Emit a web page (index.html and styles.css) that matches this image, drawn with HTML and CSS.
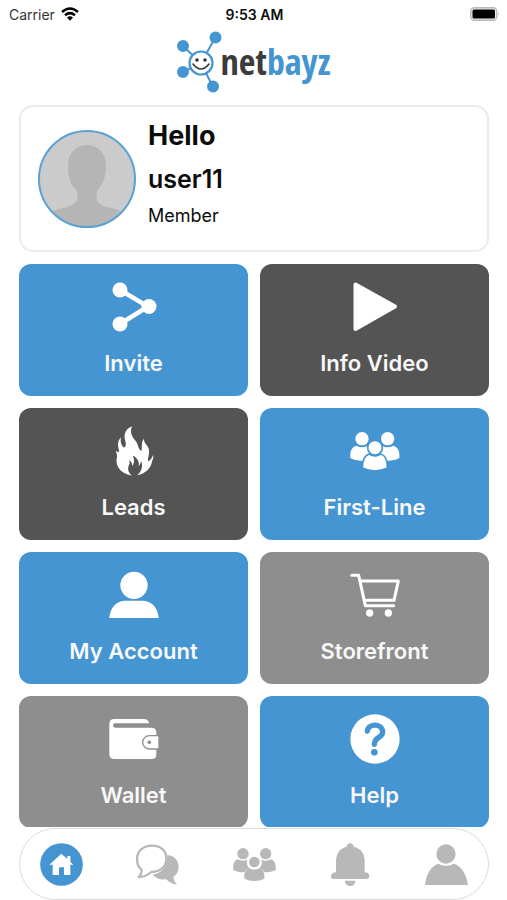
FILE: index.html
```
<!DOCTYPE html>
<html lang="en">
<head>
    <meta charset="utf-8">
    <meta name="viewport" content="width=device-width, initial-scale=1">
    <title>netbayz</title>
    <link rel="stylesheet" href="styles.css">
</head>
<body>
    <div class="status-bar">
        <div class="carrier">
            <span>Carrier</span>
            <svg class="wifi" viewBox="0 0 18 14" aria-hidden="true">
                <path d="M1 5 Q9 -2 17 5 M4 8.200 Q9 4 14 8.200" fill="none" stroke="#000" stroke-width="2.500"/>
                <path d="M6 10.500 Q9 8 12 10.500 L9 13.800 Z"/>
            </svg>
        </div>
        <span class="time">9:53 AM</span>
        <svg class="battery" viewBox="0 0 30 14" aria-hidden="true">
            <rect x="0.700" y="0.700" width="26" height="12.600" rx="3.500" fill="#eee" stroke="#b9b9b9" stroke-width="1.400"/>
            <rect x="2.500" y="2.500" width="22.500" height="9" rx="1.500"/>
            <path d="M28.200 5 Q30 7 28.200 9 Z" fill="#b9b9b9"/>
        </svg>
    </div>

    <header class="header">
        <svg class="logo-mark" viewBox="0 0 44 64" aria-hidden="true">
            <g stroke="#4495d1" stroke-width="2" fill="#4495d1">
                <path d="M7 16 L25 33 M39 8 L25 33 M7 42 L25 33 M37 57 L25 33"/>
                <circle cx="39.500" cy="7.500" r="5"/>
                <circle cx="7" cy="16" r="5"/>
                <circle cx="7" cy="42" r="5"/>
                <circle cx="37" cy="56.500" r="5"/>
                <circle cx="25" cy="33" r="11.500" fill="#fff" stroke-width="2.200"/>
            </g>
            <circle cx="21" cy="30" r="1.800" fill="#333"/>
            <circle cx="29" cy="30" r="1.800" fill="#333"/>
            <path d="M17 34 Q25 44 33 34" fill="none" stroke="#333" stroke-width="1.600" stroke-linecap="round"/>
        </svg>
        <span class="logo-text">net<b>bayz</b></span>
    </header>

    <main class="content">
        <section class="profile">
            <svg class="avatar" viewBox="0 0 98 98" aria-hidden="true">
                <clipPath id="avatarClip"><circle cx="49" cy="49" r="48"/></clipPath>
                <circle cx="49" cy="49" r="48" fill="#cbcbcb"/>
                <path clip-path="url(#avatarClip)" fill="#b5b5b5" d="M49 15 C60 15 68 23 68 36 C68 48 64 56 59 61 C57 71 60 74 69 77 C78 79 84 81 88 84 V98 H10 V84 C15 80 21 79 29 77 C38 74 41 71 39 61 C33 56 30 48 30 36 C30 23 38 15 49 15 Z"/>
                <circle cx="49" cy="49" r="48" fill="none" stroke="#5ba1d4" stroke-width="2"/>
            </svg>
            <div class="profile-text">
                <h1>Hello</h1>
                <h2>user11</h2>
                <p>Member</p>
            </div>
        </section>

        <div class="tiles">
            <a class="tile blue" href="#invite">
                <svg viewBox="0 0 50 50" aria-hidden="true">
                    <path d="M11 8 L39 24.500 L11 42" fill="none" stroke="#fff" stroke-width="4.500"/>
                    <circle cx="11" cy="8" r="7.500"/>
                    <circle cx="40" cy="24.500" r="7.500"/>
                    <circle cx="11" cy="42" r="7.500"/>
                </svg>
                <span>Invite</span>
            </a>
            <a class="tile dark" href="#video">
                <svg viewBox="0 0 50 50" aria-hidden="true">
                    <path d="M5.500 2.500 L45 24.500 L5.500 47 Z" stroke="#fff" stroke-width="4" stroke-linejoin="round"/>
                </svg>
                <span>Info Video</span>
            </a>
            <a class="tile dark" href="#leads">
                <svg viewBox="56 33 150 150" aria-hidden="true">
                    <path d="M125 34 C105 42 99 60 105 78 C108 90 106 95 101 98 C94 93 89 82 92 67 C81 78 82 92 86 106 C87 114 80 112 77 106 C76 114 82 118 80 126 C74 150 86 174 125 182 C116 174 111 164 114 155 C117 148 120 146 116 136 C124 139 125 146 126 153 C133 144 132 134 128 122 C142 128 148 142 145 153 C150 149 151 144 152 138 C158 152 156 168 140 181 C166 176 180 160 184 144 C185 136 191 130 188 120 C185 128 181 136 174 139 C170 132 178 120 176 105 C174 90 160 86 161 71 C151 82 157 98 153 108 C144 104 144 88 136 78 C126 66 117 54 125 34 Z"/>
                </svg>
                <span>Leads</span>
            </a>
            <a class="tile blue" href="#first-line">
                <svg viewBox="119 33 150 150" aria-hidden="true">
                    <g>
                        <circle cx="155" cy="71" r="20"/>
                        <circle cx="232" cy="71" r="20"/>
                        <path d="M138 92 Q155 102 172 92 Q188 98 188 128 Q170 138 150 137 Q130 136 120 129 Q117 98 138 92 Z"/>
                        <path d="M249 92 Q232 102 215 92 Q199 98 199 128 Q217 138 237 137 Q257 136 267 129 Q270 98 249 92 Z"/>
                    </g>
                    <g stroke="#4495d1" stroke-width="5">
                        <path d="M176 117 Q194 128 212 117 Q232 124 231 159 Q212 168 194 168 Q174 168 156 159 Q156 124 176 117 Z"/>
                        <circle cx="194" cy="98" r="22"/>
                    </g>
                </svg>
                <span>First-Line</span>
            </a>
            <a class="tile blue" href="#account">
                <svg viewBox="146 30 150 150" aria-hidden="true">
                    <circle cx="221" cy="76" r="41"/>
                    <path d="M147 174 C149 142 168 122 196 122 H246 C274 122 293 142 295 174 Z"/>
                </svg>
                <span>My Account</span>
            </a>
            <a class="tile gray" href="#storefront">
                <svg viewBox="119 30 150 150" aria-hidden="true">
                    <path d="M124 46 H145 L165 137 H250 M150 63 H264 L251 121 H162" fill="none" stroke="#fff" stroke-width="9" stroke-linejoin="round" stroke-linecap="round"/>
                    <circle cx="178" cy="159" r="11"/>
                    <circle cx="234" cy="159" r="11"/>
                </svg>
                <span>Storefront</span>
            </a>
            <a class="tile gray" href="#wallet">
                <svg viewBox="86 42 150 150" aria-hidden="true">
                    <path d="M102 57 H190 Q203 57 207 70 H104 Q98 70 98 76 Q98 83 104 83 H216 Q228 84 228 98 V164 Q228 177 214 177 H102 Q87 177 87 162 V72 Q87 57 102 57 Z"/>
                    <path d="M207 107 H232 Q236 107 236 112 V143 Q236 147 232 147 H207 A20 20 0 0 1 207 107 Z" stroke="#8e8e8e" stroke-width="4"/>
                    <circle cx="207" cy="127" r="5.500" fill="#8e8e8e"/>
                </svg>
                <span>Wallet</span>
            </a>
            <a class="tile blue" href="#help">
                <svg viewBox="89 42 150 150" aria-hidden="true">
                    <circle cx="164" cy="117" r="74"/>
                    <path d="M141 93 C144 69 187 69 187 96 C187 116 162 108 162 133" fill="none" stroke="#4495d1" stroke-width="16" stroke-linecap="round"/>
                    <circle cx="162" cy="157" r="10" fill="#4495d1"/>
                </svg>
                <span>Help</span>
            </a>
        </div>
    </main>

    <nav class="tab-bar">
        <a href="#home" aria-label="Home">
            <svg viewBox="90 82 129 129" aria-hidden="true">
                <circle cx="154.500" cy="146.500" r="64" fill="#4495d1"/>
                <path fill="#fff" d="M154 114 L172 130 V121 H181 V138 L190 147 H181 V178 H162 V155 H147 V178 H128 V147 H118 Z"/>
            </svg>
        </a>
        <a href="#chat" aria-label="Chat">
            <svg viewBox="378 82 129 129" aria-hidden="true">
                <path d="M472 118 C496 120 507 138 506 156 C505 169 499 178 490 183 C491 193 495 200 501 207 C488 206 476 199 469 191 C451 193 436 188 428 177 C455 173 473 154 472 118 Z"/>
                <path d="M427 90 C452 90 469 105 469 129 C469 154 450 169 424 169 C414 178 401 184 386 184 C394 177 396 169 394 161 C385 154 381 143 381 130 C381 105 401 90 427 90 Z" fill="#fff" stroke="#b8b8b8" stroke-width="7" stroke-linejoin="round"/>
            </svg>
        </a>
        <a href="#team" aria-label="Team">
            <svg viewBox="668 82 129 129" aria-hidden="true">
                <circle cx="698" cy="114" r="17"/>
                <circle cx="766" cy="114" r="17"/>
                <path d="M682 131 Q697 139 711 132 Q706 148 717 157 Q706 160 702 170 Q680 170 669 163 Q666 136 682 131 Z"/>
                <path d="M782 131 Q767 139 753 132 Q758 148 747 157 Q758 160 762 170 Q784 170 796 163 Q799 136 782 131 Z"/>
                <circle cx="732" cy="139" r="16"/>
                <path d="M716 157 Q732 166 748 157 Q764 163 762 189 Q748 196 732 196 Q716 196 702 189 Q700 163 716 157 Z"/>
            </svg>
        </a>
        <a href="#alerts" aria-label="Notifications">
            <svg viewBox="957 82 129 129" aria-hidden="true">
                <path d="M1010 93 C1010 79 1031 79 1031 93 C1053 98 1064 114 1064 137 V170 Q1078 171 1078 182 Q1078 190 1071 190 H970 Q963 190 963 182 Q963 171 978 170 V137 C978 114 989 98 1010 93 Z"/>
                <path d="M1004 195 H1037 Q1034 211 1020 211 Q1007 211 1004 195 Z"/>
            </svg>
        </a>
        <a href="#profile" aria-label="Profile">
            <svg viewBox="1245 82 129 129" aria-hidden="true">
                <circle cx="1308" cy="115" r="29"/>
                <path d="M1245 208 C1249 174 1263 151 1286 144 Q1308 157 1331 144 C1354 151 1369 174 1374 208 Z"/>
            </svg>
        </a>
    </nav>
</body>
</html>
```
FILE: styles.css
```
* {
  box-sizing: border-box;
}

body {
  margin: 0;
  height: 100vh;
  display: flex;
  flex-direction: column;
  background-color: #fff;
  color: #0c0c0c;
  font-family: Inter, "Liberation Sans", sans-serif;
}

a {
  text-decoration: none;
}

/* status bar */
.status-bar {
  display: grid;
  grid-template-columns: 1fr auto 1fr;
  align-items: center;
  height: 28px;
  padding: 0 7px 0 9px;
  font-size: 14px;
}

.carrier {
  display: flex;
  align-items: center;
  gap: 6px;
  color: #333;
}

.wifi {
  width: 18px;
  height: 14px;
}

.time {
  font-weight: 600;
}

.battery {
  width: 30px;
  height: 14px;
  justify-self: end;
}

/* logo */
.header {
  display: flex;
  justify-content: center;
  align-items: center;
  height: 68px;
  flex-shrink: 0;
}

.logo-mark {
  width: 44px;
  height: 64px;
  overflow: visible;
}

.logo-text {
  font-family: "Liberation Sans Narrow", "Open Sans Condensed", "Roboto Condensed", "Liberation Sans", sans-serif;
  font-size: 36px;
  line-height: 64px;
  font-weight: bold;
  color: #3c3c3c;
}

.logo-text b {
  color: #4495d1;
}

.content {
  flex: 1;
  min-height: 0;
  overflow: hidden;
  padding: 9px 18px 0 19px;
}

.profile {
  display: flex;
  align-items: center;
  gap: 12px;
  padding: 8px 17px;
  border: 2px solid #ebebeb;
  border-radius: 14px;
}

.avatar {
  width: 98px;
  height: 98px;
}

.profile-text {
  padding-bottom: 11px;
}

.profile-text h1,
.profile-text h2,
.profile-text p {
  margin: 0;
}

.profile-text h1 {
  font-size: 27px;
  font-weight: 700;
  line-height: 42px;
}

.profile-text h2 {
  font-size: 25px;
  font-weight: 600;
  line-height: 44px;
}

.profile-text p {
  font-size: 18px;
  line-height: 30px;
}

.tiles {
  display: grid;
  grid-template-columns: 1fr 1fr;
  gap: 12px;
  margin-top: 12px;
}

.tile {
  display: flex;
  flex-direction: column;
  align-items: center;
  gap: 18px;
  padding: 18px 8px 20px;
  border-radius: 12px;
  color: #f8f8f8;
  font-size: 22px;
  font-weight: 600;
  line-height: 26px;
}

.tile svg {
  width: 50px;
  height: 50px;
  fill: #fff;
}

.blue {
  background-color: #4495d1;
}

.dark {
  background-color: #545454;
}

.gray {
  background-color: #8e8e8e;
}

/* bottom tabs */
.tab-bar {
  display: flex;
  justify-content: space-between;
  align-items: center;
  height: 72px;
  flex-shrink: 0;
  margin: 1px 18px 0 19px;
  padding: 0 20px;
  border: 1px solid #dcdcdc;
  border-radius: 36px;
}

.tab-bar svg {
  display: block;
  width: 43px;
  height: 43px;
  fill: #b8b8b8;
}
```
